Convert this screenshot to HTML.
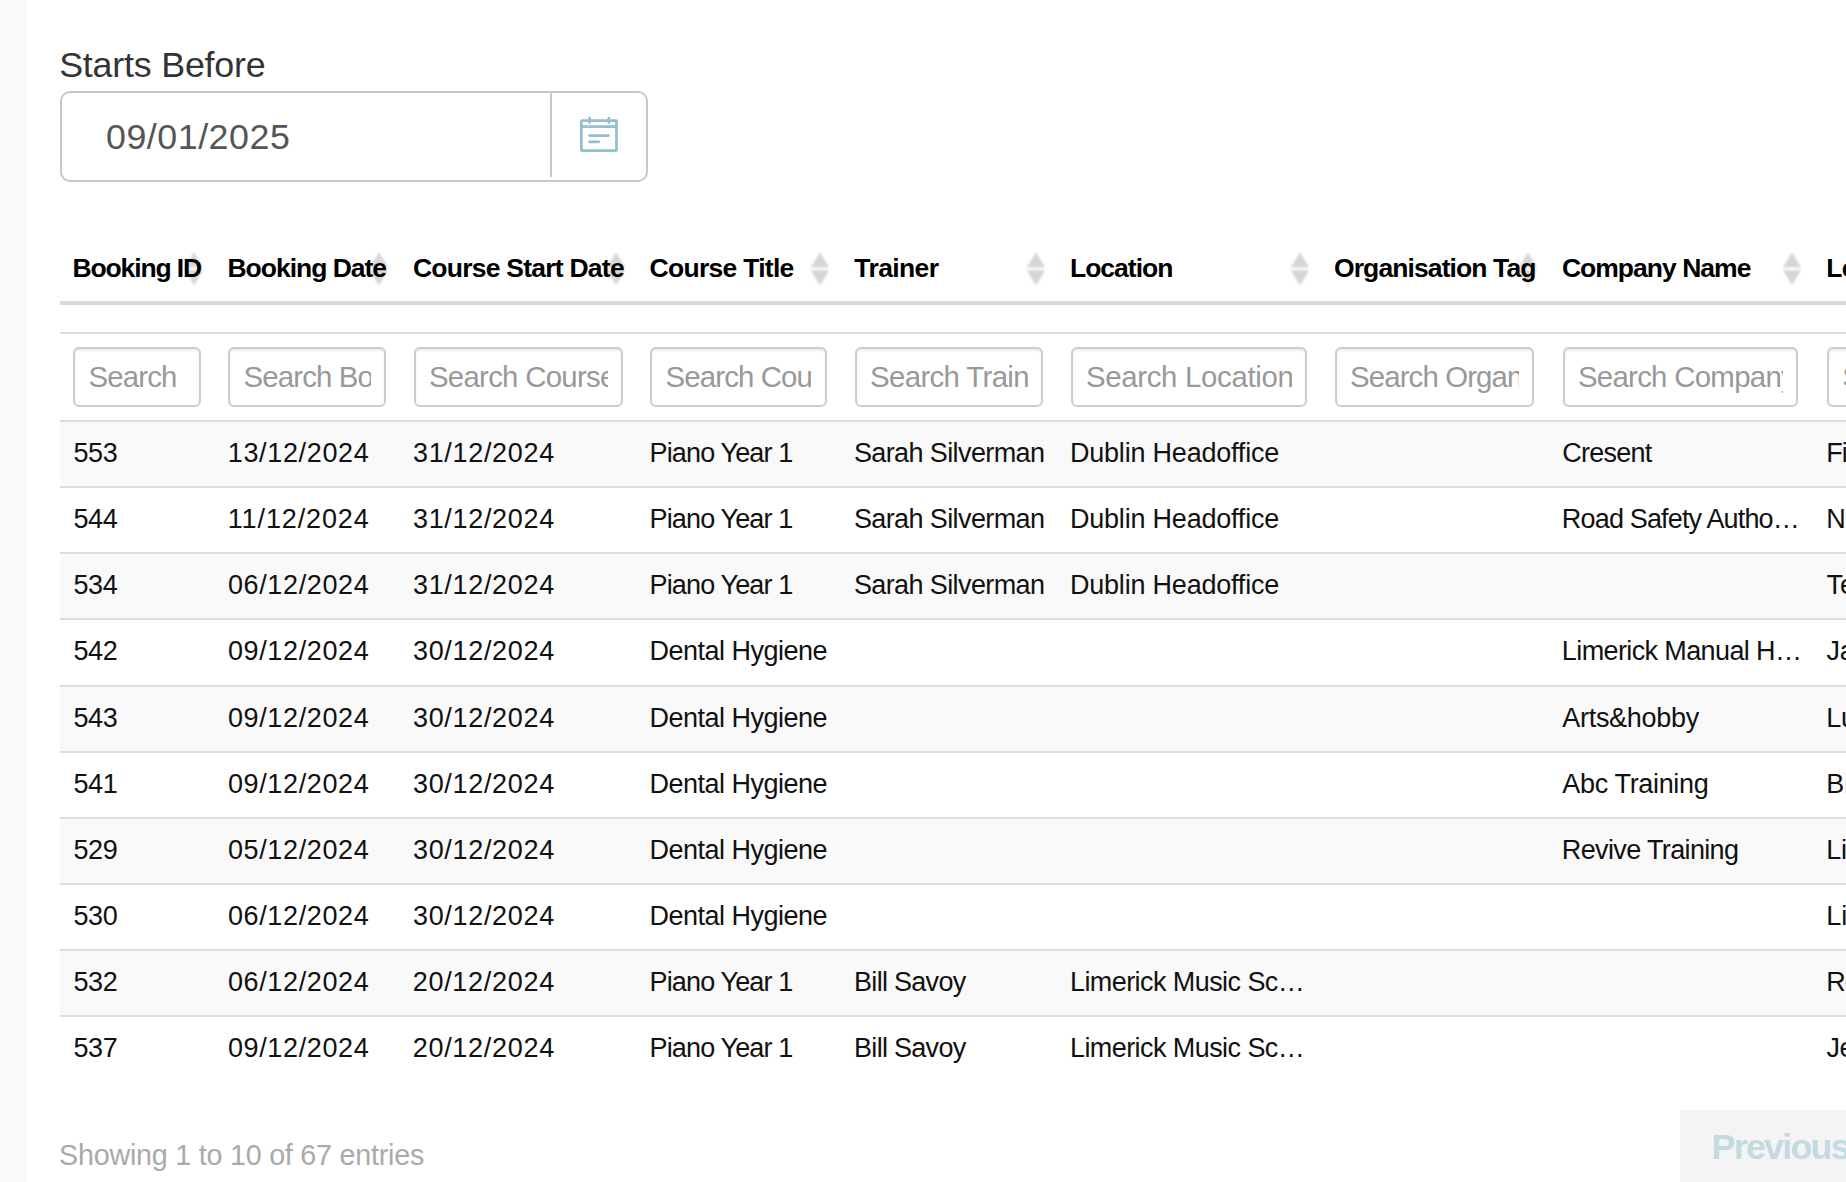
<!DOCTYPE html>
<html><head><meta charset="utf-8"><title>Bookings</title>
<style>
html,body{margin:0;padding:0;background:#fff;}
body{width:1846px;height:1182px;position:relative;overflow:hidden;font-family:"Liberation Sans",sans-serif;}
.t{position:absolute;white-space:nowrap;}
.b{position:absolute;}
</style></head><body>
<div class="b" style="left:0px;top:0px;width:27px;height:1182px;background:#f9f9f9;"></div>
<div class="t" style="left:59.19px;top:45.40px;font-size:35.80px;line-height:39.99px;font-weight:400;letter-spacing:-0.199px;color:#333;font-family:'Liberation Sans';">Starts Before</div>
<div class="b" style="left:60px;top:91px;width:588px;height:91px;border:2px solid #c8c8c8;border-radius:10px;box-sizing:border-box;background:#fff;"></div>
<div class="b" style="left:550px;top:93px;width:2px;height:84px;background:#c8c8c8;"></div>
<div class="t" style="left:106.04px;top:117.10px;font-size:35.80px;line-height:39.99px;font-weight:400;letter-spacing:0.511px;color:#555;font-family:'Liberation Sans';">09/01/2025</div>
<svg class="b" style="left:575px;top:110px" width="50" height="50" viewBox="575 110 50 50">
<g fill="none" stroke="#94bfcf" stroke-width="2.75" stroke-linecap="round">
<rect x="581.4" y="120.5" width="35.1" height="30" rx="0.4" />
<line x1="581.4" y1="126.5" x2="616.5" y2="126.5" />
<line x1="589.6" y1="118.2" x2="589.6" y2="122.4" />
<line x1="608.8" y1="118.2" x2="608.8" y2="122.4" />
<line x1="589.5" y1="135.5" x2="608.5" y2="135.5" />
<line x1="589.5" y1="141.8" x2="598.8" y2="141.8" />
</g></svg>
<svg class="b" style="left:183.9px;top:251px;filter:blur(0.9px)" width="20" height="36" viewBox="0 0 20 36"><path d="M10 1.2 L19.2 16.6 L0.8 16.6 Z M0.8 19.2 L19.2 19.2 L10 34.4 Z" fill="#d6d6d6"/></svg>
<svg class="b" style="left:368.6px;top:251px;filter:blur(0.9px)" width="20" height="36" viewBox="0 0 20 36"><path d="M10 1.2 L19.2 16.6 L0.8 16.6 Z M0.8 19.2 L19.2 19.2 L10 34.4 Z" fill="#d6d6d6"/></svg>
<svg class="b" style="left:605.9px;top:251px;filter:blur(0.9px)" width="20" height="36" viewBox="0 0 20 36"><path d="M10 1.2 L19.2 16.6 L0.8 16.6 Z M0.8 19.2 L19.2 19.2 L10 34.4 Z" fill="#d6d6d6"/></svg>
<svg class="b" style="left:809.5px;top:251px;filter:blur(0.9px)" width="20" height="36" viewBox="0 0 20 36"><path d="M10 1.2 L19.2 16.6 L0.8 16.6 Z M0.8 19.2 L19.2 19.2 L10 34.4 Z" fill="#d6d6d6"/></svg>
<svg class="b" style="left:1025.9px;top:251px;filter:blur(0.9px)" width="20" height="36" viewBox="0 0 20 36"><path d="M10 1.2 L19.2 16.6 L0.8 16.6 Z M0.8 19.2 L19.2 19.2 L10 34.4 Z" fill="#d6d6d6"/></svg>
<svg class="b" style="left:1290.0px;top:251px;filter:blur(0.9px)" width="20" height="36" viewBox="0 0 20 36"><path d="M10 1.2 L19.2 16.6 L0.8 16.6 Z M0.8 19.2 L19.2 19.2 L10 34.4 Z" fill="#d6d6d6"/></svg>
<svg class="b" style="left:1518.4px;top:251px;filter:blur(0.9px)" width="20" height="36" viewBox="0 0 20 36"><path d="M10 1.2 L19.2 16.6 L0.8 16.6 Z M0.8 19.2 L19.2 19.2 L10 34.4 Z" fill="#d6d6d6"/></svg>
<svg class="b" style="left:1781.6px;top:251px;filter:blur(0.9px)" width="20" height="36" viewBox="0 0 20 36"><path d="M10 1.2 L19.2 16.6 L0.8 16.6 Z M0.8 19.2 L19.2 19.2 L10 34.4 Z" fill="#d6d6d6"/></svg>
<div class="t" style="left:72.50px;top:253.62px;font-size:26.50px;line-height:29.60px;font-weight:700;letter-spacing:-1.134px;color:#000;font-family:'Liberation Sans';">Booking ID</div>
<div class="t" style="left:227.50px;top:253.62px;font-size:26.50px;line-height:29.60px;font-weight:700;letter-spacing:-1.024px;color:#000;font-family:'Liberation Sans';">Booking Date</div>
<div class="t" style="left:412.90px;top:253.62px;font-size:26.50px;line-height:29.60px;font-weight:700;letter-spacing:-0.754px;color:#000;font-family:'Liberation Sans';">Course Start Date</div>
<div class="t" style="left:649.60px;top:253.62px;font-size:26.50px;line-height:29.60px;font-weight:700;letter-spacing:-0.723px;color:#000;font-family:'Liberation Sans';">Course Title</div>
<div class="t" style="left:854.37px;top:253.62px;font-size:26.50px;line-height:29.60px;font-weight:700;letter-spacing:-0.618px;color:#000;font-family:'Liberation Sans';">Trainer</div>
<div class="t" style="left:1070.00px;top:253.62px;font-size:26.50px;line-height:29.60px;font-weight:700;letter-spacing:-1.003px;color:#000;font-family:'Liberation Sans';">Location</div>
<div class="t" style="left:1334.00px;top:253.62px;font-size:26.50px;line-height:29.60px;font-weight:700;letter-spacing:-0.901px;color:#000;font-family:'Liberation Sans';">Organisation Tag</div>
<div class="t" style="left:1561.90px;top:253.62px;font-size:26.50px;line-height:29.60px;font-weight:700;letter-spacing:-0.976px;color:#000;font-family:'Liberation Sans';">Company Name</div>
<div class="t" style="left:1826.30px;top:253.62px;font-size:26.50px;line-height:29.60px;font-weight:700;letter-spacing:-0.759px;color:#000;font-family:'Liberation Sans';">Learner Name</div>
<div class="b" style="left:60px;top:301px;width:1786px;height:4px;background:#dadada;"></div>
<div class="b" style="left:60px;top:332px;width:1786px;height:2px;background:#dddddd;"></div>
<div class="b" style="left:60px;top:420px;width:1786px;height:2px;background:#dddddd;"></div>
<div class="b" style="left:73.3px;top:347px;width:128.2px;height:60px;border:2px solid #cccccc;border-radius:6px;box-sizing:border-box;background:#fff;box-shadow:inset 0 2px 2px rgba(0,0,0,0.075);"></div>
<div class="b" style="left:228.3px;top:347px;width:158.2px;height:60px;border:2px solid #cccccc;border-radius:6px;box-sizing:border-box;background:#fff;box-shadow:inset 0 2px 2px rgba(0,0,0,0.075);"></div>
<div class="b" style="left:413.7px;top:347px;width:209.3px;height:60px;border:2px solid #cccccc;border-radius:6px;box-sizing:border-box;background:#fff;box-shadow:inset 0 2px 2px rgba(0,0,0,0.075);"></div>
<div class="b" style="left:650.4px;top:347px;width:176.20000000000005px;height:60px;border:2px solid #cccccc;border-radius:6px;box-sizing:border-box;background:#fff;box-shadow:inset 0 2px 2px rgba(0,0,0,0.075);"></div>
<div class="b" style="left:854.9px;top:347px;width:188.19999999999993px;height:60px;border:2px solid #cccccc;border-radius:6px;box-sizing:border-box;background:#fff;box-shadow:inset 0 2px 2px rgba(0,0,0,0.075);"></div>
<div class="b" style="left:1070.8px;top:347px;width:236.4000000000001px;height:60px;border:2px solid #cccccc;border-radius:6px;box-sizing:border-box;background:#fff;box-shadow:inset 0 2px 2px rgba(0,0,0,0.075);"></div>
<div class="b" style="left:1334.8px;top:347px;width:199.4000000000001px;height:60px;border:2px solid #cccccc;border-radius:6px;box-sizing:border-box;background:#fff;box-shadow:inset 0 2px 2px rgba(0,0,0,0.075);"></div>
<div class="b" style="left:1562.7px;top:347px;width:235.39999999999986px;height:60px;border:2px solid #cccccc;border-radius:6px;box-sizing:border-box;background:#fff;box-shadow:inset 0 2px 2px rgba(0,0,0,0.075);"></div>
<div class="b" style="left:1827.1px;top:347px;width:162.9000000000001px;height:60px;border:2px solid #cccccc;border-radius:6px;box-sizing:border-box;background:#fff;box-shadow:inset 0 2px 2px rgba(0,0,0,0.075);"></div>
<div class="t" style="left:88.48px;top:360.99px;font-size:29.40px;line-height:32.84px;font-weight:400;letter-spacing:-0.826px;color:#999;font-family:'Liberation Sans';width:97.82px;overflow:hidden;">Search</div>
<div class="t" style="left:243.48px;top:360.99px;font-size:29.40px;line-height:32.84px;font-weight:400;letter-spacing:-0.847px;color:#999;font-family:'Liberation Sans';width:127.82px;overflow:hidden;">Search Bo</div>
<div class="t" style="left:428.88px;top:360.99px;font-size:29.40px;line-height:32.84px;font-weight:400;letter-spacing:-0.708px;color:#999;font-family:'Liberation Sans';width:178.92px;overflow:hidden;">Search Course</div>
<div class="t" style="left:665.58px;top:360.99px;font-size:29.40px;line-height:32.84px;font-weight:400;letter-spacing:-0.881px;color:#999;font-family:'Liberation Sans';width:145.82px;overflow:hidden;">Search Cou</div>
<div class="t" style="left:870.08px;top:360.99px;font-size:29.40px;line-height:32.84px;font-weight:400;letter-spacing:-0.647px;color:#999;font-family:'Liberation Sans';width:157.82px;overflow:hidden;">Search Train</div>
<div class="t" style="left:1085.98px;top:360.99px;font-size:29.40px;line-height:32.84px;font-weight:400;letter-spacing:-0.326px;color:#999;font-family:'Liberation Sans';width:206.02px;overflow:hidden;">Search Location</div>
<div class="t" style="left:1349.98px;top:360.99px;font-size:29.40px;line-height:32.84px;font-weight:400;letter-spacing:-0.869px;color:#999;font-family:'Liberation Sans';width:169.02px;overflow:hidden;">Search Organ</div>
<div class="t" style="left:1577.88px;top:360.99px;font-size:29.40px;line-height:32.84px;font-weight:400;letter-spacing:-0.707px;color:#999;font-family:'Liberation Sans';width:205.02px;overflow:hidden;">Search Company</div>
<div class="t" style="left:1842.28px;top:360.99px;font-size:29.40px;line-height:32.84px;font-weight:400;letter-spacing:0.000px;color:#999;font-family:'Liberation Sans';width:132.52px;overflow:hidden;">S</div>
<div class="b" style="left:60px;top:422.0px;width:1786px;height:64.12px;background:#f9f9f9;"></div>
<div class="b" style="left:60px;top:486.12px;width:1786px;height:2px;background:#dddddd;"></div>
<div class="b" style="left:60px;top:552.25px;width:1786px;height:2px;background:#dddddd;"></div>
<div class="b" style="left:60px;top:554.25px;width:1786px;height:64.12px;background:#f9f9f9;"></div>
<div class="b" style="left:60px;top:618.38px;width:1786px;height:2px;background:#dddddd;"></div>
<div class="b" style="left:60px;top:684.5px;width:1786px;height:2px;background:#dddddd;"></div>
<div class="b" style="left:60px;top:686.5px;width:1786px;height:64.12px;background:#f9f9f9;"></div>
<div class="b" style="left:60px;top:750.62px;width:1786px;height:2px;background:#dddddd;"></div>
<div class="b" style="left:60px;top:816.75px;width:1786px;height:2px;background:#dddddd;"></div>
<div class="b" style="left:60px;top:818.75px;width:1786px;height:64.12px;background:#f9f9f9;"></div>
<div class="b" style="left:60px;top:882.88px;width:1786px;height:2px;background:#dddddd;"></div>
<div class="b" style="left:60px;top:949.0px;width:1786px;height:2px;background:#dddddd;"></div>
<div class="b" style="left:60px;top:951.0px;width:1786px;height:64.12px;background:#f9f9f9;"></div>
<div class="b" style="left:60px;top:1015.12px;width:1786px;height:2px;background:#dddddd;"></div>
<div class="t" style="left:73.41px;top:438.06px;font-size:27.00px;line-height:30.16px;font-weight:400;letter-spacing:-0.300px;color:#111;font-family:'Liberation Sans';">553</div>
<div class="t" style="left:227.73px;top:438.06px;font-size:27.00px;line-height:30.16px;font-weight:400;letter-spacing:0.655px;color:#111;font-family:'Liberation Sans';">13/12/2024</div>
<div class="t" style="left:413.01px;top:438.06px;font-size:27.00px;line-height:30.16px;font-weight:400;letter-spacing:0.668px;color:#111;font-family:'Liberation Sans';">31/12/2024</div>
<div class="t" style="left:649.56px;top:438.06px;font-size:27.00px;line-height:30.16px;font-weight:400;letter-spacing:-0.854px;color:#111;font-family:'Liberation Sans';">Piano Year 1</div>
<div class="t" style="left:853.94px;top:438.06px;font-size:27.00px;line-height:30.16px;font-weight:400;letter-spacing:-0.610px;color:#111;font-family:'Liberation Sans';">Sarah Silverman</div>
<div class="t" style="left:1069.96px;top:438.06px;font-size:27.00px;line-height:30.16px;font-weight:400;letter-spacing:-0.209px;color:#111;font-family:'Liberation Sans';">Dublin Headoffice</div>
<div class="t" style="left:1562.14px;top:438.06px;font-size:27.00px;line-height:30.16px;font-weight:400;letter-spacing:-0.729px;color:#111;font-family:'Liberation Sans';">Cresent</div>
<div class="t" style="left:1826.26px;top:438.06px;font-size:27.00px;line-height:30.16px;font-weight:400;letter-spacing:-0.899px;color:#111;font-family:'Liberation Sans';">Fiona</div>
<div class="t" style="left:73.41px;top:504.19px;font-size:27.00px;line-height:30.16px;font-weight:400;letter-spacing:-0.300px;color:#111;font-family:'Liberation Sans';">544</div>
<div class="t" style="left:227.73px;top:504.19px;font-size:27.00px;line-height:30.16px;font-weight:400;letter-spacing:0.880px;color:#111;font-family:'Liberation Sans';">11/12/2024</div>
<div class="t" style="left:413.01px;top:504.19px;font-size:27.00px;line-height:30.16px;font-weight:400;letter-spacing:0.668px;color:#111;font-family:'Liberation Sans';">31/12/2024</div>
<div class="t" style="left:649.56px;top:504.19px;font-size:27.00px;line-height:30.16px;font-weight:400;letter-spacing:-0.854px;color:#111;font-family:'Liberation Sans';">Piano Year 1</div>
<div class="t" style="left:853.94px;top:504.19px;font-size:27.00px;line-height:30.16px;font-weight:400;letter-spacing:-0.610px;color:#111;font-family:'Liberation Sans';">Sarah Silverman</div>
<div class="t" style="left:1069.96px;top:504.19px;font-size:27.00px;line-height:30.16px;font-weight:400;letter-spacing:-0.209px;color:#111;font-family:'Liberation Sans';">Dublin Headoffice</div>
<div class="t" style="left:1561.86px;top:504.19px;font-size:27.00px;line-height:30.16px;font-weight:400;letter-spacing:-0.837px;color:#111;font-family:'Liberation Sans';">Road Safety Autho…</div>
<div class="t" style="left:1826.26px;top:504.19px;font-size:27.00px;line-height:30.16px;font-weight:400;letter-spacing:-0.078px;color:#111;font-family:'Liberation Sans';">Niamh</div>
<div class="t" style="left:73.41px;top:570.31px;font-size:27.00px;line-height:30.16px;font-weight:400;letter-spacing:-0.300px;color:#111;font-family:'Liberation Sans';">534</div>
<div class="t" style="left:227.88px;top:570.31px;font-size:27.00px;line-height:30.16px;font-weight:400;letter-spacing:0.639px;color:#111;font-family:'Liberation Sans';">06/12/2024</div>
<div class="t" style="left:413.01px;top:570.31px;font-size:27.00px;line-height:30.16px;font-weight:400;letter-spacing:0.668px;color:#111;font-family:'Liberation Sans';">31/12/2024</div>
<div class="t" style="left:649.56px;top:570.31px;font-size:27.00px;line-height:30.16px;font-weight:400;letter-spacing:-0.854px;color:#111;font-family:'Liberation Sans';">Piano Year 1</div>
<div class="t" style="left:853.94px;top:570.31px;font-size:27.00px;line-height:30.16px;font-weight:400;letter-spacing:-0.610px;color:#111;font-family:'Liberation Sans';">Sarah Silverman</div>
<div class="t" style="left:1069.96px;top:570.31px;font-size:27.00px;line-height:30.16px;font-weight:400;letter-spacing:-0.209px;color:#111;font-family:'Liberation Sans';">Dublin Headoffice</div>
<div class="t" style="left:1826.42px;top:570.31px;font-size:27.00px;line-height:30.16px;font-weight:400;letter-spacing:-0.024px;color:#111;font-family:'Liberation Sans';">Tess</div>
<div class="t" style="left:73.41px;top:636.44px;font-size:27.00px;line-height:30.16px;font-weight:400;letter-spacing:-0.300px;color:#111;font-family:'Liberation Sans';">542</div>
<div class="t" style="left:227.88px;top:636.44px;font-size:27.00px;line-height:30.16px;font-weight:400;letter-spacing:0.639px;color:#111;font-family:'Liberation Sans';">09/12/2024</div>
<div class="t" style="left:413.01px;top:636.44px;font-size:27.00px;line-height:30.16px;font-weight:400;letter-spacing:0.668px;color:#111;font-family:'Liberation Sans';">30/12/2024</div>
<div class="t" style="left:649.56px;top:636.44px;font-size:27.00px;line-height:30.16px;font-weight:400;letter-spacing:-0.513px;color:#111;font-family:'Liberation Sans';">Dental Hygiene</div>
<div class="t" style="left:1561.86px;top:636.44px;font-size:27.00px;line-height:30.16px;font-weight:400;letter-spacing:-0.617px;color:#111;font-family:'Liberation Sans';">Limerick Manual H…</div>
<div class="t" style="left:1826.56px;top:636.44px;font-size:27.00px;line-height:30.16px;font-weight:400;letter-spacing:-0.218px;color:#111;font-family:'Liberation Sans';">Jane</div>
<div class="t" style="left:73.41px;top:702.56px;font-size:27.00px;line-height:30.16px;font-weight:400;letter-spacing:-0.300px;color:#111;font-family:'Liberation Sans';">543</div>
<div class="t" style="left:227.88px;top:702.56px;font-size:27.00px;line-height:30.16px;font-weight:400;letter-spacing:0.639px;color:#111;font-family:'Liberation Sans';">09/12/2024</div>
<div class="t" style="left:413.01px;top:702.56px;font-size:27.00px;line-height:30.16px;font-weight:400;letter-spacing:0.668px;color:#111;font-family:'Liberation Sans';">30/12/2024</div>
<div class="t" style="left:649.56px;top:702.56px;font-size:27.00px;line-height:30.16px;font-weight:400;letter-spacing:-0.513px;color:#111;font-family:'Liberation Sans';">Dental Hygiene</div>
<div class="t" style="left:1562.30px;top:702.56px;font-size:27.0px;line-height:30.16px;letter-spacing:-0.302px;color:#111">Arts&amp;hobby</div>
<div class="t" style="left:1826.26px;top:702.56px;font-size:27.00px;line-height:30.16px;font-weight:400;letter-spacing:-0.300px;color:#111;font-family:'Liberation Sans';">Luke</div>
<div class="t" style="left:73.41px;top:768.69px;font-size:27.00px;line-height:30.16px;font-weight:400;letter-spacing:-0.300px;color:#111;font-family:'Liberation Sans';">541</div>
<div class="t" style="left:227.88px;top:768.69px;font-size:27.00px;line-height:30.16px;font-weight:400;letter-spacing:0.639px;color:#111;font-family:'Liberation Sans';">09/12/2024</div>
<div class="t" style="left:413.01px;top:768.69px;font-size:27.00px;line-height:30.16px;font-weight:400;letter-spacing:0.668px;color:#111;font-family:'Liberation Sans';">30/12/2024</div>
<div class="t" style="left:649.56px;top:768.69px;font-size:27.00px;line-height:30.16px;font-weight:400;letter-spacing:-0.513px;color:#111;font-family:'Liberation Sans';">Dental Hygiene</div>
<div class="t" style="left:1562.30px;top:768.69px;font-size:27.00px;line-height:30.16px;font-weight:400;letter-spacing:-0.334px;color:#111;font-family:'Liberation Sans';">Abc Training</div>
<div class="t" style="left:1826.26px;top:768.69px;font-size:27.00px;line-height:30.16px;font-weight:400;letter-spacing:-0.065px;color:#111;font-family:'Liberation Sans';">Bill</div>
<div class="t" style="left:73.41px;top:834.81px;font-size:27.00px;line-height:30.16px;font-weight:400;letter-spacing:-0.300px;color:#111;font-family:'Liberation Sans';">529</div>
<div class="t" style="left:227.88px;top:834.81px;font-size:27.00px;line-height:30.16px;font-weight:400;letter-spacing:0.639px;color:#111;font-family:'Liberation Sans';">05/12/2024</div>
<div class="t" style="left:413.01px;top:834.81px;font-size:27.00px;line-height:30.16px;font-weight:400;letter-spacing:0.668px;color:#111;font-family:'Liberation Sans';">30/12/2024</div>
<div class="t" style="left:649.56px;top:834.81px;font-size:27.00px;line-height:30.16px;font-weight:400;letter-spacing:-0.513px;color:#111;font-family:'Liberation Sans';">Dental Hygiene</div>
<div class="t" style="left:1561.86px;top:834.81px;font-size:27.00px;line-height:30.16px;font-weight:400;letter-spacing:-0.638px;color:#111;font-family:'Liberation Sans';">Revive Training</div>
<div class="t" style="left:1826.26px;top:834.81px;font-size:27.00px;line-height:30.16px;font-weight:400;letter-spacing:-0.300px;color:#111;font-family:'Liberation Sans';">Lisa</div>
<div class="t" style="left:73.41px;top:900.94px;font-size:27.00px;line-height:30.16px;font-weight:400;letter-spacing:-0.300px;color:#111;font-family:'Liberation Sans';">530</div>
<div class="t" style="left:227.88px;top:900.94px;font-size:27.00px;line-height:30.16px;font-weight:400;letter-spacing:0.639px;color:#111;font-family:'Liberation Sans';">06/12/2024</div>
<div class="t" style="left:413.01px;top:900.94px;font-size:27.00px;line-height:30.16px;font-weight:400;letter-spacing:0.668px;color:#111;font-family:'Liberation Sans';">30/12/2024</div>
<div class="t" style="left:649.56px;top:900.94px;font-size:27.00px;line-height:30.16px;font-weight:400;letter-spacing:-0.513px;color:#111;font-family:'Liberation Sans';">Dental Hygiene</div>
<div class="t" style="left:1826.26px;top:900.94px;font-size:27.00px;line-height:30.16px;font-weight:400;letter-spacing:-0.072px;color:#111;font-family:'Liberation Sans';">Liam</div>
<div class="t" style="left:73.41px;top:967.06px;font-size:27.00px;line-height:30.16px;font-weight:400;letter-spacing:-0.300px;color:#111;font-family:'Liberation Sans';">532</div>
<div class="t" style="left:227.88px;top:967.06px;font-size:27.00px;line-height:30.16px;font-weight:400;letter-spacing:0.639px;color:#111;font-family:'Liberation Sans';">06/12/2024</div>
<div class="t" style="left:412.74px;top:967.06px;font-size:27.00px;line-height:30.16px;font-weight:400;letter-spacing:0.698px;color:#111;font-family:'Liberation Sans';">20/12/2024</div>
<div class="t" style="left:649.56px;top:967.06px;font-size:27.00px;line-height:30.16px;font-weight:400;letter-spacing:-0.854px;color:#111;font-family:'Liberation Sans';">Piano Year 1</div>
<div class="t" style="left:854.06px;top:967.06px;font-size:27.00px;line-height:30.16px;font-weight:400;letter-spacing:-0.711px;color:#111;font-family:'Liberation Sans';">Bill Savoy</div>
<div class="t" style="left:1069.96px;top:967.06px;font-size:27.00px;line-height:30.16px;font-weight:400;letter-spacing:-0.572px;color:#111;font-family:'Liberation Sans';">Limerick Music Sc…</div>
<div class="t" style="left:1826.26px;top:967.06px;font-size:27.00px;line-height:30.16px;font-weight:400;letter-spacing:-1.073px;color:#111;font-family:'Liberation Sans';">Rebecca</div>
<div class="t" style="left:73.41px;top:1033.19px;font-size:27.00px;line-height:30.16px;font-weight:400;letter-spacing:-0.300px;color:#111;font-family:'Liberation Sans';">537</div>
<div class="t" style="left:227.88px;top:1033.19px;font-size:27.00px;line-height:30.16px;font-weight:400;letter-spacing:0.639px;color:#111;font-family:'Liberation Sans';">09/12/2024</div>
<div class="t" style="left:412.74px;top:1033.19px;font-size:27.00px;line-height:30.16px;font-weight:400;letter-spacing:0.698px;color:#111;font-family:'Liberation Sans';">20/12/2024</div>
<div class="t" style="left:649.56px;top:1033.19px;font-size:27.00px;line-height:30.16px;font-weight:400;letter-spacing:-0.854px;color:#111;font-family:'Liberation Sans';">Piano Year 1</div>
<div class="t" style="left:854.06px;top:1033.19px;font-size:27.00px;line-height:30.16px;font-weight:400;letter-spacing:-0.711px;color:#111;font-family:'Liberation Sans';">Bill Savoy</div>
<div class="t" style="left:1069.96px;top:1033.19px;font-size:27.00px;line-height:30.16px;font-weight:400;letter-spacing:-0.572px;color:#111;font-family:'Liberation Sans';">Limerick Music Sc…</div>
<div class="t" style="left:1826.56px;top:1033.19px;font-size:27.00px;line-height:30.16px;font-weight:400;letter-spacing:-0.564px;color:#111;font-family:'Liberation Sans';">Jenny</div>
<div class="t" style="left:59.11px;top:1138.93px;font-size:28.70px;line-height:32.06px;font-weight:400;letter-spacing:-0.230px;color:#aaaaaa;font-family:'Liberation Sans';">Showing 1 to 10 of 67 entries</div>
<div class="b" style="left:1680px;top:1110px;width:200px;height:90px;background:#f4f4f4;"></div>
<div class="t" style="left:1711.55px;top:1127.20px;font-size:35.80px;line-height:39.99px;font-weight:700;letter-spacing:-1.736px;color:#c4dae3;font-family:'Liberation Sans';">Previous</div>
</body></html>
